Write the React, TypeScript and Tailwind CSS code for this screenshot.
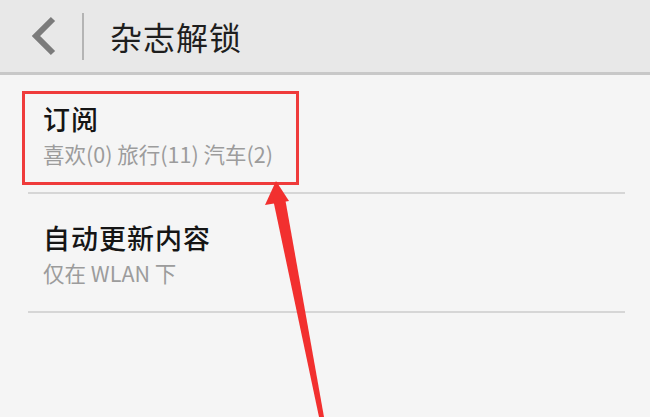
import React from 'react';

const font = { fontFamily: '"Noto Sans CJK SC", "Noto Sans", sans-serif' };

interface Item {
  title: string;
  sub: string;
}

const items: Item[] = [
  { title: '订阅', sub: '喜欢(0) 旅行(11) 汽车(2)' },
  { title: '自动更新内容', sub: '仅在 WLAN 下' },
];

export default function App() {
  return (
    <div className="relative w-[650px] h-[417px] overflow-hidden bg-[#f5f5f5]" style={font}>
      <header className="h-[75px] bg-[#e8e8e8] border-b-[3px] border-[#c8c8c8] flex items-center">
        <button className="w-[82px] h-full flex items-center justify-center pl-[6px]">
          <svg width="26" height="40" viewBox="0 0 26 40">
            <path d="M22 3 L5 20 L22 37" fill="none" stroke="#7b7b7b" strokeWidth="6" />
          </svg>
        </button>
        <div className="w-[2px] h-[47px] bg-[#b4b4b4]" />
        <h1 className="ml-[26px] text-[32px] leading-none text-[#1e1e1e] tracking-[1px]">杂志解锁</h1>
      </header>

      <main className="ml-[28px] mr-[25px]">
        {items.map((item) => (
          <div key={item.title} className="border-b-2 border-[#d6d6d6]">
            <div className="pl-[15px] pt-[29px] pb-[26px]">
              <div className="text-[27px] leading-[30px] font-medium text-[#151515] tracking-[1px]">{item.title}</div>
              <div className="mt-[8px] text-[21.5px] leading-[24px] text-[#9c9c9c]">{item.sub}</div>
            </div>
          </div>
        ))}
      </main>

      {/* highlight annotation */}
      <div className="absolute left-[22px] top-[91px] w-[277px] h-[94px] border-[3px] border-[#ef3b3b]" />
      <svg className="absolute left-0 top-0" width="650" height="417" viewBox="0 0 650 417">
        <polygon points="276,181 265,205 289,201" fill="#f2302f" />
        <polygon points="273,199 285,198 324,417 319,417" fill="#f2302f" />
      </svg>
    </div>
  );
}
